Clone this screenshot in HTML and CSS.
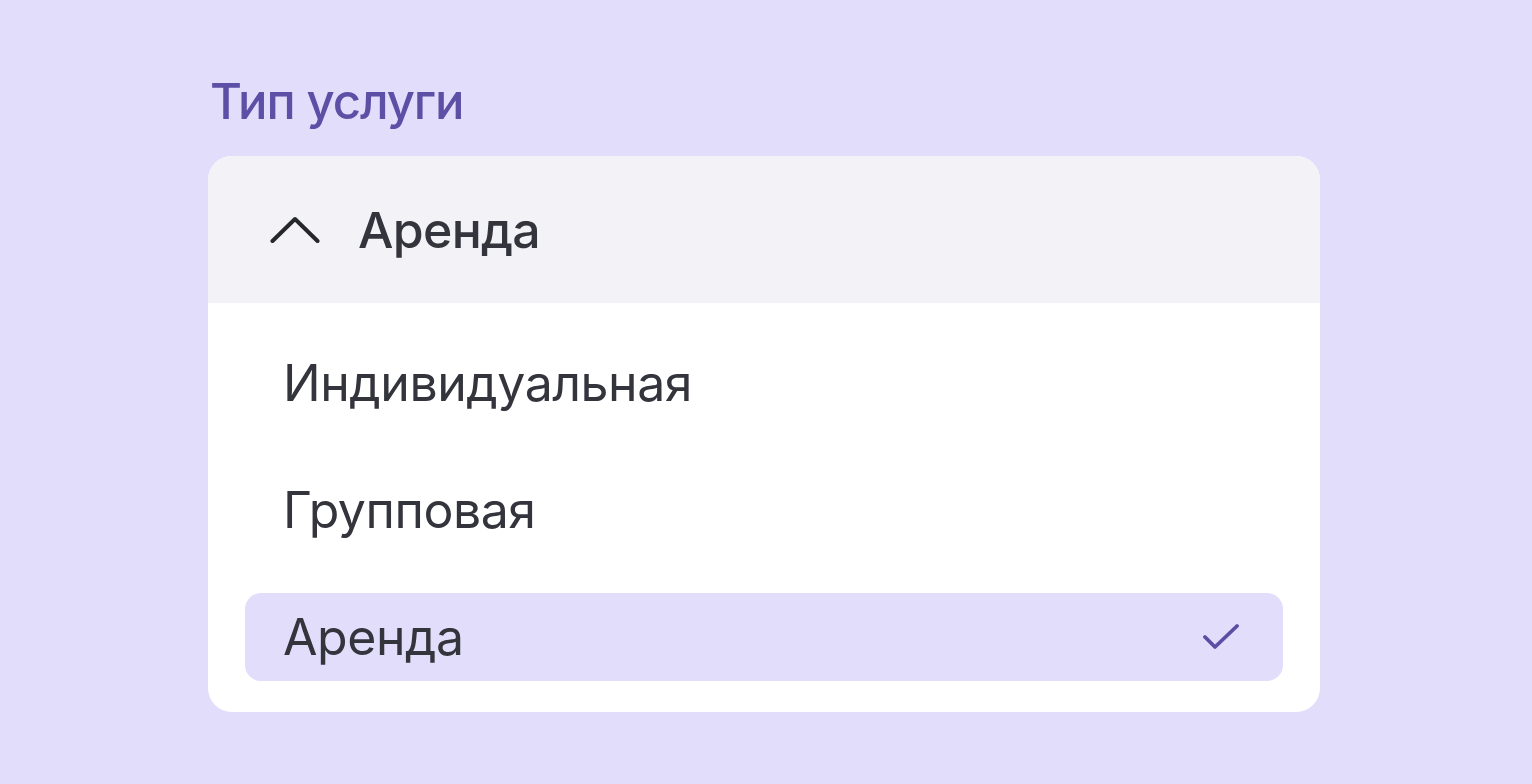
FILE: index.html
```html
<!DOCTYPE html>
<html lang="ru">
<head>
    <meta charset="UTF-8">
    <meta name="viewport" content="width=device-width, initial-scale=1.0">
    <title>Тип услуги</title>
    <link rel="stylesheet" href="styles.css">
</head>
<body>
    <div class="Field">
        <div class="label">Тип услуги</div>
        <div class="select">
            <div class="select-head">
                <svg class="chevron" width="50" height="28" viewBox="0 0 50 28">
                    <path d="M2.5 25 L25 3 L47.5 25" fill="none" stroke="#26272d" stroke-width="4" stroke-linecap="round" stroke-linejoin="round"/>
                </svg>
                <span class="head-text">Аренда</span>
            </div>
            <div class="options">
                <div class="option">Индивидуальная</div>
                <div class="option">Групповая</div>
                <div class="option selected">
                    <span>Аренда</span>
                    <svg class="check" width="36" height="28" viewBox="0 0 36 28">
                        <path d="M2 14 L12 24 L34 3" fill="none" stroke="#5b4ea4" stroke-width="3.8" stroke-linecap="round" stroke-linejoin="round"/>
                    </svg>
                </div>
            </div>
        </div>
    </div>
</body>
</html>
```

FILE: styles.css
```css
body{
    margin: 0;
    background-color: #e3ddfc;
    font-family: Inter, "Noto Sans", sans-serif;
}
.Field{
    width: 1112px;
    padding: 72px 0 0 208px;
}
.label{
    font-size: 49px;
    line-height: 60px;
    font-weight: 500;
    letter-spacing: -1.1px;
    color: #5c4fa5;
    margin: 0 0 24px 2px;
}
.select{
    background: #ffffff;
    border-radius: 24px;
    overflow: hidden;
}
.select-head{
    height: 147px;
    background: #f2f2f7;
    display: flex;
    align-items: center;
    padding-left: 62px;
    gap: 38px;
}
.chevron{
    display: block;
}
.head-text{
    font-size: 50px;
    font-weight: 500;
    letter-spacing: -0.7px;
    color: #33343c;
}
.options{
    display: flex;
    flex-direction: column;
    gap: 39px;
    padding: 36px 37px 31px 37px;
}
.option{
    height: 88px;
    display: flex;
    align-items: center;
    justify-content: space-between;
    padding: 0 44px 0 38px;
    font-size: 50px;
    font-weight: 400;
    letter-spacing: -0.45px;
    color: #33343c;
    border-radius: 16px;
}
.selected{
    background: #e3ddfc;
}
.check{
    display: block;
}
```
